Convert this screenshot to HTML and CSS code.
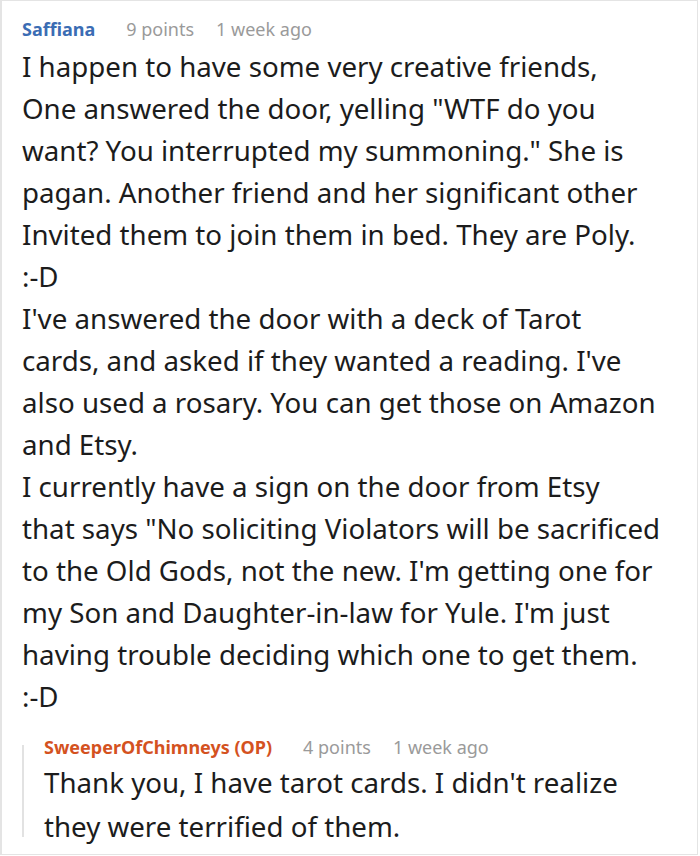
FILE: index.html
```html
<!DOCTYPE html>
<html>
<head>
<meta charset="utf-8">
<link rel="stylesheet" href="styles.css">
</head>
<body>
<div class="comment">
  <div class="meta">
    <span class="author">Saffiana</span>
    <span class="points">9 points</span>
    <span class="time">1 week ago</span>
  </div>
  <p class="text">I happen to have some very creative friends,<br>One answered the door, yelling "WTF do you<br>want? You interrupted my summoning." She is<br>pagan. Another friend and her significant other<br>Invited them to join them in bed. They are Poly.<br>:-D<br>I've answered the door with a deck of Tarot<br>cards, and asked if they wanted a reading. I've<br>also used a rosary. You can get those on Amazon<br>and Etsy.<br>I currently have a sign on the door from Etsy<br>that says "No soliciting Violators will be sacrificed<br>to the Old Gods, not the new. I'm getting one for<br>my Son and Daughter-in-law for Yule. I'm just<br>having trouble deciding which one to get them.<br>:-D</p>
  <div class="reply">
    <div class="thread-line"></div>
    <div class="reply-body">
      <div class="meta">
        <span class="author op">SweeperOfChimneys (OP)</span>
        <span class="points">4 points</span>
        <span class="time">1 week ago</span>
      </div>
      <p class="text reply-text">Thank you, I have tarot cards. I didn't realize<br>they were terrified of them.</p>
    </div>
  </div>
</div>
</body>
</html>
```

FILE: styles.css
```css
html, body {
  margin: 0;
  padding: 0;
  background: #fff;
}
body {
  font-family: "Noto Sans", "Open Sans", sans-serif;
  color: #1c1c1c;
}
.comment {
  width: 698px;
  height: 855px;
  box-sizing: border-box;
  border: 1px solid #e4e4e4;
  border-left-width: 2px;
  padding: 16px 0 5px 20px;
  overflow: hidden;
}
.meta {
  display: flex;
  align-items: baseline;
  font-size: 18px;
  line-height: 24px;
  white-space: nowrap;
}
.author {
  font-weight: 700;
  color: #3b6db4;
  margin-right: 31px;
}
.author.op {
  color: #d4521f;
}
.points {
  color: #9a9a9a;
  margin-right: 22px;
}
.time {
  color: #9a9a9a;
}
.text {
  margin: 4px 0 0;
  font-size: 27.7px;
  line-height: 42px;
  white-space: nowrap;
}
.reply {
  display: flex;
  margin-top: 18px;
}
.thread-line {
  width: 2px;
  flex: none;
  background: #e2e2e2;
  margin: 10px 20px 11px 0;
}
.reply-text {
  margin-top: 1px;
  line-height: 44px;
}
```
